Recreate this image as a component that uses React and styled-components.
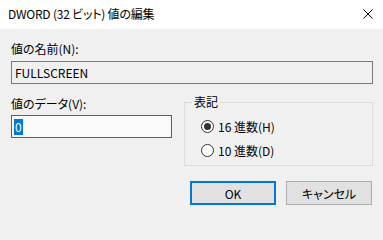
import styled, { createGlobalStyle } from "styled-components";

const GlobalStyle = createGlobalStyle`
  html, body {
    margin: 0;
    padding: 0;
    background: #f0f0f0;
  }
  body {
    font-family: "Noto Sans CJK JP", "Noto Sans", sans-serif;
    font-size: 12px;
    color: #000;
  }
`;

const Dialog = styled.div`
  width: 383px;
  height: 222px;
  background: #f0f0f0;
  display: flex;
  flex-direction: column;
  overflow: hidden;
`;

const TitleBar = styled.div`
  height: 29px;
  flex: none;
  background: #ffffff;
  display: flex;
  align-items: center;
  justify-content: space-between;
  padding: 0 10px 0 8px;
`;

const Title = styled.span`
  font-size: 12px;
  line-height: 16px;
  font-feature-settings: "palt";
  letter-spacing: -0.2px;
  margin-top: -1px;
`;

const Close = styled.svg`
  width: 10px;
  height: 10px;
  margin-top: -1px;
`;

const Body = styled.div`
  padding: 12px 10px 0 11px;
  display: flex;
  flex-direction: column;
`;

const Label = styled.div`
  line-height: 16px;
  font-feature-settings: "palt";
`;

const Field = styled.div`
  box-sizing: border-box;
  height: 23px;
  border: 1px solid ${(p) => (p.$focused ? "#0078d7" : "#7a7a7a")};
  background: ${(p) => (p.$focused ? "#fafafa" : "#f0f0f0")};
  margin-top: ${(p) => p.$gap}px;
  padding-left: ${(p) => (p.$focused ? 2 : 3)}px;
  display: flex;
  align-items: center;
  line-height: 16px;
`;

const Selected = styled.span`
  background: #0078d7;
  color: #ffffff;
  padding: 0 1px;
  line-height: 16px;
`;

const Middle = styled.div`
  display: grid;
  grid-template-columns: 161px 189px;
  column-gap: 12px;
  margin-top: 12px;
`;

const Column = styled.div`
  display: flex;
  flex-direction: column;
`;

const Group = styled.fieldset`
  margin: 0;
  padding: 6px 0 3px 16px;
  border: 1px solid #dcdcdc;
  min-width: 0;
`;

const Legend = styled.legend`
  padding: 0 2px;
  margin-left: -9px;
  line-height: 12px;
  font-feature-settings: "palt";
`;

const RadioRow = styled.div`
  height: 24px;
  display: flex;
  align-items: center;
  gap: 4px;
  font-feature-settings: "palt";
`;

const RadioCircle = styled.span`
  box-sizing: border-box;
  width: 13px;
  height: 13px;
  border-radius: 50%;
  border: 1px solid #333333;
  background: #ffffff;
  display: flex;
  align-items: center;
  justify-content: center;
  &::after {
    content: "";
    width: 7px;
    height: 7px;
    border-radius: 50%;
    background: #333333;
    display: ${(p) => (p.$checked ? "block" : "none")};
  }
`;

const Buttons = styled.div`
  display: flex;
  justify-content: flex-end;
  gap: 10px;
  margin-top: 15px;
  margin-right: 1px;
`;

const Button = styled.div`
  box-sizing: border-box;
  width: 86px;
  height: 24px;
  background: #e1e1e1;
  border: ${(p) => (p.$primary ? "2px solid #0078d7" : "1px solid #adadad")};
  display: flex;
  align-items: center;
  justify-content: center;
  font-feature-settings: "palt";
`;

export default function App() {
  return (
    <Dialog>
      <GlobalStyle />
      <TitleBar>
        <Title>DWORD (32 ビット) 値の編集</Title>
        <Close viewBox="0 0 10 10">
          <path d="M0.5 0.5 L9.5 9.5 M9.5 0.5 L0.5 9.5" stroke="#000" strokeWidth="1" fill="none" />
        </Close>
      </TitleBar>
      <Body>
        <Label>値の名前(N):</Label>
        <Field $gap={4}>FULLSCREEN</Field>
        <Middle>
          <Column>
            <Label>値のデータ(V):</Label>
            <Field $gap={3} $focused>
              <Selected>0</Selected>
            </Field>
          </Column>
          <Group>
            <Legend>表記</Legend>
            <RadioRow>
              <RadioCircle $checked />
              16 進数(H)
            </RadioRow>
            <RadioRow>
              <RadioCircle />
              10 進数(D)
            </RadioRow>
          </Group>
        </Middle>
        <Buttons>
          <Button $primary>OK</Button>
          <Button>キャンセル</Button>
        </Buttons>
      </Body>
    </Dialog>
  );
}
